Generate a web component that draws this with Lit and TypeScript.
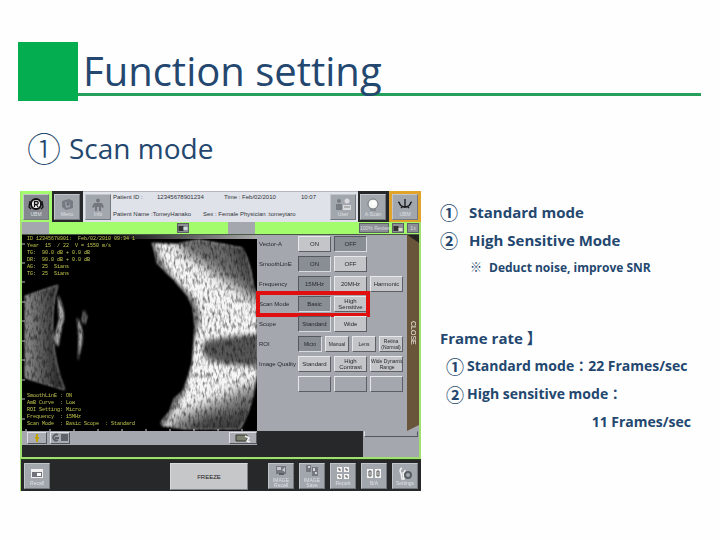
import { LitElement, html, css, svg } from "lit";
import { customElement, property, state } from "lit/decorators.js";
import { classMap } from "lit/directives/class-map.js";

interface Setting {
  name: string;
  options: string[];
  chosen: number;
  marked?: boolean;
}

const SETTINGS: Setting[] = [
  { name: "Vector-A", options: ["ON", "OFF"], chosen: 1 },
  { name: "SmoothLinE", options: ["ON", "OFF"], chosen: 0 },
  { name: "Frequency", options: ["15MHz", "20MHz", "Harmonic"], chosen: 0 },
  { name: "Scan Mode", options: ["Basic", "High\nSensitive"], chosen: 0, marked: true },
  { name: "Scope", options: ["Standard", "Wide"], chosen: 0 },
  { name: "ROI", options: ["Micro", "Manual", "Lens", "Retina\n(Normal)"], chosen: 0 },
  { name: "Image Quality", options: ["Standard", "High\nContrast", "Wide Dynamic\nRange"], chosen: -1 },
  { name: "", options: ["", "", ""], chosen: -1 },
];

const icons: Record<string, unknown> = {
  probe: svg`<circle cx="8" cy="6" r="5" fill="#fff" stroke="#111" stroke-width="2"/><path d="M6.500 9V3.500h2.200a1.500 1.500 0 0 1 0 3H6.500M8.500 6.500L10 9M2 3l-1 6 2 2M14 3l1 6-2 2" fill="none" stroke="#111" stroke-width="1.300"/>`,
  disk: svg`<path d="M3 3l7-2 4 2v7l-7 2-4-3z" fill="#777b82"/><path d="M6 4l5 1v4l-4 1z" fill="#9a9ea5"/><circle cx="9" cy="6" r="1.500" fill="#6a6e75"/>`,
  person: svg`<circle cx="8" cy="2.500" r="2" fill="#73777d"/><path d="M4 5h8l2 4-2 1-1-2v5H9V9H7v4H5V8l-1 2-2-1z" fill="#73777d"/>`,
  people: svg`<circle cx="4" cy="3" r="2" fill="#777b82"/><path d="M1 6h6v6H1z" fill="#777b82"/><circle cx="12" cy="3" r="2.500" fill="#d8dade"/><path d="M8 7h8v5H8z" fill="#d8dade"/><path d="M9 9h6" stroke="#888" />`,
  lamp: svg`<circle cx="8" cy="6" r="5" fill="#f6f6f4" stroke="#70747a"/><circle cx="9" cy="5" r="2" fill="#fff"/><path d="M5 11h6v2H5z" fill="#888c92"/>`,
  fan: svg`<path d="M8 1v9M2 4c1 4 3 5 6 5s5-1 6-5M1 4l2 1M15 4l-2 1M4 10l2-2M12 10l-2-2" fill="none" stroke="#15171a" stroke-width="1.300"/>`,
  folder: svg`<path d="M2 2h12v9H2z" fill="#f1f1f1"/><path d="M3 5h10v5H3z" fill="#70747a"/><path d="M8 6h4v3H8z" fill="#fff"/>`,
  save: svg`<path d="M3 2h10v8H3z" fill="#75797f"/><path d="M4 3h4v3H4zM9 6l3-3v5z" fill="#c6c8cc"/><path d="M6 9h5v2H6z" fill="#5d6167"/>`,
  copy: svg`<path d="M2 1h5v7H2zM8 3h6v9H8z" fill="#75797f"/><path d="M9 4h2v3H9zM4 2h2v2H4zM11 8h2v2h-2z" fill="#d2d4d7"/>`,
  grid: svg`<path d="M2 0h5v5H2zM9 0h5v5H9zM2 7h5v5H2zM9 7h5v5H9z" fill="#f4f4f4"/><path d="M3 2h2v2M10 2h2v2M3 9h2v2M10 9h2v2" fill="none" stroke="#555" />`,
  pair: svg`<path d="M1 2h6v9H1zM9 2h6v9H9z" fill="#f4f4f4"/><path d="M3 4h2v5H3zM11 4h2v5h-2z" fill="none" stroke="#555"/>`,
  tools: svg`<path d="M5 1a3 3 0 0 0-1 5l1 6h2L6 6a3 3 0 0 0 2-3" fill="none" stroke="#f2f2f2" stroke-width="1.500"/><circle cx="11" cy="8" r="3" fill="none" stroke="#5b5f65" stroke-width="2"/>`,
};

@customElement("device-key")
class DeviceKey extends LitElement {
  @property() icon = "";
  @property() label = "";
  static styles = css`
    :host { display: block; width: 26px; height: 26px; flex: none; }
    button {
      box-sizing: border-box; width: 100%; height: 100%; padding: 0; margin: 0; overflow: hidden;
      display: flex; flex-direction: column; align-items: center; justify-content: center; gap: 1px;
      background: #a2a6ad; border: 1px solid; border-color: #c2c5ca #74787e #74787e #c2c5ca;
      color: #dfe1e4; font: 5px/5px "Liberation Sans", sans-serif; white-space: pre;
    }
    svg { width: 16px; height: 13px; flex: none; }
    :host(.dark) button { background: #85898f; }
  `;
  render() {
    return html`<button type="button"><svg viewBox="0 0 16 13" aria-hidden="true">${icons[this.icon]}</svg>${this.label}</button>`;
  }
}

@customElement("echo-view")
class EchoView extends LitElement {
  static styles = css`
    :host { display: grid; background: #000; overflow: hidden; }
    svg, .info { grid-area: 1 / 1; }
    svg { width: 100%; height: 100%; display: block; }
    .info {
      display: flex; flex-direction: column; justify-content: space-between; padding: 1px 5px 3px;
      font: 5px/7px "Liberation Mono", monospace; color: #c8cc50; white-space: pre; z-index: 1;
    }
  `;
  render() {
    const ticks = [9, 28, 47, 67, 86, 106, 125, 145, 164, 184];
    return html`
      <svg viewBox="0 0 235 196" preserveAspectRatio="none" role="img" aria-label="Ultrasound scan">
        <defs>
          <filter id="grain" x="0" y="0" width="235" height="196" filterUnits="userSpaceOnUse" color-interpolation-filters="sRGB">
            <feTurbulence type="fractalNoise" baseFrequency="0.420 0.160" numOctaves="2" seed="7" result="n"/>
            <feColorMatrix in="n" type="matrix" values="1.300 0 0 0 0.260  1.300 0 0 0 0.260  1.300 0 0 0 0.260  0 0 0 0 1" result="g"/>
            <feBlend in="SourceGraphic" in2="g" mode="multiply" result="m"/>
            <feComposite in="m" in2="SourceGraphic" operator="in"/>
          </filter>
          <filter id="soft" x="0" y="-20" width="260" height="240" filterUnits="userSpaceOnUse" color-interpolation-filters="sRGB"><feGaussianBlur stdDeviation="6"/></filter>
          <filter id="smear" color-interpolation-filters="sRGB"><feGaussianBlur stdDeviation="2"/></filter>
          <filter id="edge" color-interpolation-filters="sRGB"><feGaussianBlur stdDeviation="1"/></filter>
          <linearGradient id="ramp"><stop offset="0" stop-color="#000"/><stop offset="1" stop-color="#aaa"/></linearGradient>
          <linearGradient id="lens"><stop offset="0" stop-color="#8c8c8c"/><stop offset="1" stop-color="#1c1c1c"/></linearGradient>
          <clipPath id="wall"><path d="M130 8L155 9 176 5 200 9 220 13Q229 28 231 50L235 62V140L231 160Q227 178 218 194L165 194 140 191 139 187 148 176 152 164 161 156 166 142 170 128 173 92 171 72 165 60 152 45 135 28 133 18Z"/></clipPath>
        </defs>
        <rect x="80" width="155" height="4" fill="url(#ramp)"/>
        <g filter="url(#grain)">
          <g filter="url(#edge)">
            <g clip-path="url(#wall)">
              <rect x="120" width="115" height="196" fill="#f6f6f6"/>
              <g filter="url(#soft)">
                <path d="M150 -10H255V78Q222 58 200 42T160 16Z" fill="#6a6a6a"/>
                <path d="M195 -10H255V85Q228 50 195 -10Z" fill="#404040"/>
                <path d="M255 146L220 154 196 166 155 182 136 210H255Z" fill="#7c7c7c"/>
                <path d="M255 158L208 178 180 184 150 210H255Z" fill="#404040"/>
              </g>
              <path d="M130 8Q136 34 158 54T173 92 160 156L138 192" fill="none" stroke="#4a4a4a" stroke-width="5" filter="url(#smear)"/>
              <path d="M183 106L206 102 240 99V132L205 129 185 124Q178 115 183 106Z" fill="#565656" filter="url(#smear)"/>
            </g>
            <path d="M3 61L36 50Q29 75 31 96Q32 130 43 155L3 143Z" fill="url(#lens)"/>
            <path d="M36 60Q45 80 40 90L36 112 32 105 37 85Z" fill="#aaa"/>
            <path d="M55 82Q62 94 60 108L56 126Q58 102 55 82Z" fill="#aaa"/>
            <path d="M62 75l3 6-2 9-3-5z" fill="#444"/>
          </g>
        </g>
        ${ticks.map((y) => svg`<path d=${`M0 ${y}h3`} stroke="#bbb"/>`)}
        ${ticks.map((y, i) => svg`<path d=${`M${i * 24 + 4} 194v2`} stroke="#ddd"/>`)}
      </svg>
      <div class="info">
        <div>ID 12345678901:  Feb/02/2010 09:34 1
Year  15  / 22  V = 1550 m/s
TG:  90.0 dB + 0.0 dB
DR:  90.0 dB + 0.0 dB
AG:  25  Sians
TG:  25  Sians</div>
        <div>SmoothLinE : ON
AmB Curve  : Low
ROI Setting: Micro
Frequency  : 15MHz
Scan Mode  : Basic Scope  : Standard</div>
      </div>`;
  }
}

@customElement("setting-panel")
class SettingPanel extends LitElement {
  @state() chosen = SETTINGS.map((s) => s.chosen);
  static styles = css`
    :host { display: flex; background: #a4a8ae; font: 6px/6px "Liberation Sans", sans-serif; color: #26282c; }
    .rows { flex: 1; min-width: 0; padding: 1px 4px 0 2px; display: grid; grid-auto-rows: 16px; gap: 4px; align-content: start; }
    .row { position: relative; display: grid; grid-template-columns: 39px 1fr; align-items: center; height: 100%; white-space: nowrap; }
    .options { display: grid; grid-template-columns: repeat(3, 1fr); gap: 3px; height: 100%; }
    .options.four { grid-template-columns: repeat(4, 1fr); }
    button {
      padding: 0; margin: 0; min-width: 0; border: 1px solid; border-color: #e6e8ea #5c6066 #5c6066 #e6e8ea;
      background: #c3c5c9; font: inherit; color: inherit; white-space: pre; overflow: hidden;
      display: grid; place-items: center; text-align: center;
    }
    button.small { font-size: 5px; }
    button.on { background: #898d94; border-color: #55595f #d8dade #d8dade #55595f; }
    button.blank { background: #a4a8ae; }
    .marked::after { content: ""; position: absolute; inset: -5px 33px -5px -3px; border: 4px solid #e01010; }
    .close {
      width: 12px; padding: 0; border: 0; background: linear-gradient(215deg, #26241e 6px, #69563a 7px); color: #f0ede4;
      writing-mode: vertical-rl; font: 7px/12px "Liberation Sans", sans-serif; display: block; text-align: center;
      clip-path: polygon(0 0, 100% 0, 100% 97%, 0 100%);
    }
  `;
  pick(row: number, option: number) {
    this.chosen = this.chosen.map((c, i) => (i === row ? option : c));
  }
  render() {
    return html`
      <div class="rows">
        ${SETTINGS.map((s, r) => html`
          <div class=${classMap({ row: true, marked: !!s.marked })} role="group" aria-label=${s.name || "Spare"}>
            <span>${s.name}</span>
            <div class=${classMap({ options: true, four: s.options.length === 4 })}>
              ${s.options.map((o, i) => html`<button type="button"
                class=${classMap({ on: this.chosen[r] === i, blank: !o, small: s.options.length === 4 || o.length > 14 })}
                aria-pressed=${this.chosen[r] === i} @click=${() => this.pick(r, i)}>${o}</button>`)}
            </div>
          </div>`)}
      </div>
      <button type="button" class="close">CLOSE</button>`;
  }
}

@customElement("scanner-screen")
class ScannerScreen extends LitElement {
  static styles = css`
    :host { display: block; background: #26282a; font: 6px/8px "Liberation Sans", sans-serif; color: #30343a; border-left: 1px solid #9fe070; }
    .top { display: flex; height: 31px; }
    .cell { padding: 3px 3px 2px 2px; flex: none; }
    .green { background: #a2fc6c; }
    .orange { background: #e0a42c; padding: 3px; }
    .patient { flex: 1; min-width: 0; display: flex; background: #dfe2e9; border-top: 1px solid #b4b8be; }
    .patient .cell { padding: 2px 0 2px 2px; }
    .patient .cell:last-child { padding-right: 2px; }
    .facts { flex: 1; min-width: 0; padding: 1px 0 4px 2px; display: flex; flex-direction: column; justify-content: space-between; white-space: pre; }
    .facts div { display: flex; }
    .facts div span:first-child { width: 44px; flex: none; }
    .facts .first span:nth-child(2) { width: 67px; }
    .facts .first span:nth-child(3) { width: 77px; }
    .facts .second span:first-child { width: 90px; }
    .frame { border: solid #9fe070; border-width: 0 2px 2px 1px; }
    .tabs { display: flex; height: 13px; background: #a2fc6c; align-items: stretch; border-bottom: 1px solid #4a5a44; box-sizing: border-box; }
    .tab { background: #a4a8ae; width: 27px; flex: none; }
    .chip { background: #8c9096; border: 1px solid #5c6066; width: 12px; height: 10px; padding: 0; margin: 1px 0; color: #dcdee2; font: 5px/7px "Liberation Sans", sans-serif; box-sizing: border-box; flex: none; white-space: nowrap; }
    .tiny { display: block; width: 100%; height: 7px; }
    .wide { width: 30px; }
    .left { flex: 128; }
    .mid { flex: 39; }
    .right { flex: 104; }
    .chips { display: flex; gap: 3px; }
    .gap { flex: 1; }
    .body { display: grid; grid-template-columns: 235fr 162fr; height: 196px; }
    .under { display: grid; grid-template-columns: 235fr 106fr 56fr; height: 26px; }
    .tools { height: 14px; background: #a4a8ae; display: flex; gap: 3px; padding: 1px 0 1px 5px; box-sizing: border-box; }
    .tool { width: 20px; height: 12px; padding: 0; background: #a9adb3; border: 1px solid; border-color: #dfe1e4 #54585e #54585e #dfe1e4; }
    .tool.last { width: 28px; }
    .tool svg { display: block; margin: auto; width: 16px; height: 10px; }
    .side { background: #a4a8ae; }
    .slot { height: 6px; margin: 0 1px; border: 1px solid; border-color: transparent #54585e #54585e #dfe1e4; box-sizing: border-box; }
    .bottom { display: flex; height: 32px; padding: 3px; gap: 5px; box-sizing: border-box; border-top: 1px solid #26401c; }
    .freeze { width: 78px; height: 27px; margin: 0 15px 0 auto; padding: 0; background: #c6c7c8; border: 1px solid; border-color: #d8d9da #808286 #808286 #d8d9da; font: 6px/8px "Liberation Sans", sans-serif; color: #222; }
  `;
  render() {
    return html`
      <div class="top">
        <div class="cell green"><device-key class="dark" icon="probe" label="UBM"></device-key></div>
        <div class="cell"><device-key icon="disk" label="Menu"></device-key></div>
        <div class="patient">
          <div class="cell"><device-key icon="person" label="Info"></device-key></div>
          <div class="facts">
            <div class="first"><span>Patient ID :</span><span>12345678901234</span><span>Time : Feb/02/2010</span><span>10:07</span></div>
            <div class="second"><span>Patient Name :TomeyHanako</span><span>Sex : Female Physician :tomeytaro</span></div>
          </div>
          <div class="cell"><device-key icon="people" label="User"></device-key></div>
        </div>
        <div class="cell"><device-key icon="lamp" label="A-Scan"></device-key></div>
        <div class="cell orange"><device-key icon="fan" label="UBM"></device-key></div>
      </div>
      <div class="frame">
        <div class="tabs">
          <span class="tab"></span><span class="left"></span>
          <button type="button" class="chip" aria-label="Thumbnail"><svg class="tiny" viewBox="0 0 9 7"><path d="M0 1h5v5H0z" fill="#333"/><path d="M5 2h4v3H5z" fill="#cdd"/></svg></button>
          <span class="mid"></span><span class="tab"></span><span class="right"></span>
          <div class="chips">
            <button type="button" class="chip wide">100% Review</button>
            <button type="button" class="chip" aria-label="Picture"><svg class="tiny" viewBox="0 0 9 7"><path d="M0 1h5v5H0z" fill="#333"/><path d="M5 3h4v3H5z" fill="#ddc"/></svg></button>
            <button type="button" class="chip">1x</button>
          </div>
        </div>
        <div class="body"><echo-view></echo-view><setting-panel></setting-panel></div>
        <div class="under">
          <div class="tools">
            <button type="button" class="tool" aria-label="Marker"><svg viewBox="0 0 16 10"><path d="M8 1v8M6 5h4" stroke="#c0a000" stroke-width="2"/></svg></button>
            <button type="button" class="tool" aria-label="Rotate"><svg viewBox="0 0 16 10"><path d="M6 2a3 3 0 1 0 0 5M3 5h4" stroke="#5f6369" stroke-width="2" fill="none"/><rect x="9" y="1" width="7" height="7" fill="#5f6369"/></svg></button>
            <span class="gap"></span>
            <button type="button" class="tool last" aria-label="Export"><svg viewBox="0 0 16 10"><path d="M1 2h11v6H1z" fill="#7b8070" stroke="#34382c"/><path d="M10 3l4 2-2 3 3 1" stroke="#f4f4f4" stroke-width="1.500" fill="none"/></svg></button>
          </div>
          <span></span>
          <div class="side"><div class="slot"></div></div>
        </div>
      </div>
      <div class="bottom">
        <device-key icon="folder" label="Recall"></device-key>
        <button type="button" class="freeze">FREEZE</button>
        <device-key icon="save" label=${"IMAGE\nRecall"}></device-key>
        <device-key icon="copy" label=${"IMAGE\nSave"}></device-key>
        <device-key icon="grid" label="Report"></device-key>
        <device-key icon="pair" label="B/A"></device-key>
        <device-key icon="tools" label="Settings"></device-key>
      </div>`;
  }
}

@customElement("app-root")
class AppRoot extends LitElement {
  static styles = css`
    :host { display: block; min-height: 100vh; box-sizing: border-box; padding: 42px 19px 0 18px; background: #fefefe; color: #23476f; font-family: "Open Sans", "Noto Sans CJK JP", sans-serif; }
    header { display: flex; align-items: flex-start; }
    .block { width: 60px; height: 59px; background: #04ae50; flex: none; }
    h1 { flex: 1; height: 51px; margin: 0; padding-left: 5px; border-bottom: 3px solid #279f5c; font-size: 40px; line-height: 58px; font-weight: 400; }
    h2 { margin: 27px 0 0 9px; font-size: 28px; line-height: 40px; font-weight: 400; display: flex; gap: 8px; }
    .num { font: 300 34px/40px "Noto Sans CJK JP", sans-serif; }
    main { display: grid; grid-template-columns: minmax(0, 401fr) minmax(0, 261fr); gap: 19px; margin: 23px 0 0 2px; align-items: start; }
    .notes { padding-top: 7px; font-size: 15px; line-height: 28px; font-weight: 700; white-space: nowrap; }
    ol, p { margin: 0; padding: 0; list-style: none; }
    li { display: flex; }
    .modes li { gap: 11px; }
    .mark { font: 700 18px/28px "Noto Sans CJK JP", sans-serif; }
    .aside { display: flex; gap: 7px; padding-left: 30px; font-size: 12px; }
    .rate { margin-top: 42px; }
    .rates { padding-left: 6px; font-size: 14px; }
    .rates li { gap: 3px; }
    .end { padding-right: 10px; font-size: 14px; text-align: right; }
  `;
  render() {
    return html`
      <header><div class="block"></div><h1>Function setting</h1></header>
      <h2><span class="num">①</span>Scan mode</h2>
      <main>
        <scanner-screen></scanner-screen>
        <section class="notes">
          <ol class="modes">
            <li><span class="mark">①</span>Standard mode</li>
            <li><span class="mark">②</span>High Sensitive Mode</li>
          </ol>
          <p class="aside"><span>※</span>Deduct noise, improve SNR</p>
          <p class="rate">Frame rate 】</p>
          <ol class="rates">
            <li><span class="mark">①</span>Standard mode：22 Frames/sec</li>
            <li><span class="mark">②</span>High sensitive mode：</li>
          </ol>
          <p class="end">11 Frames/sec</p>
        </section>
      </main>`;
  }
}
